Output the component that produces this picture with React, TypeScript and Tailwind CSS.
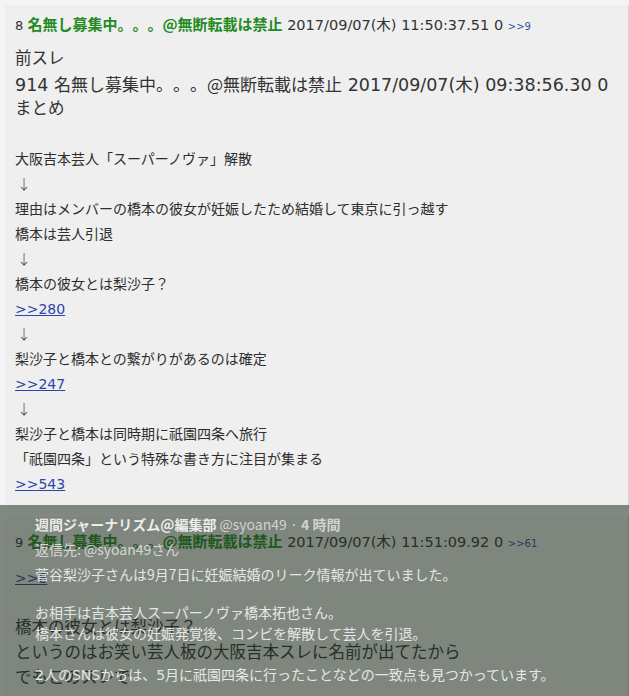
const sans = "font-['DejaVu_Sans','Noto_Sans_CJK_JP',sans-serif]";
const cjk = "font-['Noto_Sans_CJK_JP','DejaVu_Sans',sans-serif]";

function PostHeader({ no, date, reply }: { no: number; date: string; reply: string }) {
    return (
        <div className={`${sans} flex items-baseline h-[20px] text-[14.5px] leading-[20px] text-[#333] whitespace-nowrap`}>
            <span className="text-[13px]">{no}&nbsp;</span>
            <b className={`${cjk} text-[15px] leading-[20px] font-bold text-[#238b23]`}>名無し募集中。。。@無断転載は禁止</b>
            <span>&nbsp;{date}&nbsp;</span>
            <span className="text-[10px] text-[#3050a8]">{reply}</span>
        </div>
    );
}

function Anchor({ to }: { to: string }) {
    return <span className={`${sans} text-[14px] text-[#2b45a8] underline`}>{to}</span>;
}

export default function App() {
    const big = `${sans} h-[25px] text-[16.5px] leading-[25px] text-[#333] whitespace-nowrap`;
    const small = `${cjk} h-[25px] text-[14px] leading-[25px] text-[#2e2e2e] whitespace-nowrap`;
    const arrow = `${cjk} h-[25px] text-[14px] leading-[25px] font-light text-[#444] pl-[2px]`;

    return (
        <div className="relative h-[696px] w-[629px] overflow-hidden bg-[#f4f4f6] pl-[5px] pt-[5px] [text-spacing-trim:space-all]">
            {/* レス 8 */}
            <div className="mb-[7px] w-[624px] border-r border-[#d6d6d6] bg-[#efefef] pl-[10px] pt-[9px] pb-[12px]">
                <PostHeader no={8} date="2017/09/07(木) 11:50:37.51 0" reply=">>9" />
                <div className="mt-[12px]">
                    <div className={big}>前スレ</div>
                    <div className={`${big} text-[17.5px]`}>
                        914 <span className={`${cjk} text-[17px]`}>名無し募集中。。。@無断転載は禁止</span> 2017/09/07(木) 09:38:56.30 0
                    </div>
                    <div className={big}>まとめ</div>
                    <div className={small}>&nbsp;</div>
                    <div className={small}>大阪吉本芸人「スーパーノヴァ」解散</div>
                    <div className={arrow}>↓</div>
                    <div className={small}>理由はメンバーの橋本の彼女が妊娠したため結婚して東京に引っ越す</div>
                    <div className={small}>橋本は芸人引退</div>
                    <div className={arrow}>↓</div>
                    <div className={small}>橋本の彼女とは梨沙子？</div>
                    <div className={small}><Anchor to=">>280" /></div>
                    <div className={arrow}>↓</div>
                    <div className={small}>梨沙子と橋本との繋がりがあるのは確定</div>
                    <div className={small}><Anchor to=">>247" /></div>
                    <div className={arrow}>↓</div>
                    <div className={small}>梨沙子と橋本は同時期に祇園四条へ旅行</div>
                    <div className={small}>「祇園四条」という特殊な書き方に注目が集まる</div>
                    <div className={small}><Anchor to=">>543" /></div>
                </div>
            </div>

            {/* レス 9 */}
            <div className="w-[624px] border-t border-[#fbfbfb] border-r border-r-[#d6d6d6] bg-[#efefef] pl-[10px] pt-[15px] pb-[20px]">
                <PostHeader no={9} date="2017/09/07(木) 11:51:09.92 0" reply=">>61" />
                <div className="mt-[14px]">
                    <div className={big}><Anchor to=">>8" /></div>
                    <div className={big}>&nbsp;</div>
                    <div className={`${big} h-[24px] leading-[24px]`}>橋本の彼女とは梨沙子？</div>
                    <div className={`${big} h-[24px] leading-[24px]`}>というのはお笑い芸人板の大阪吉本スレに名前が出てたから</div>
                    <div className={big}>でもこのスレで</div>
                </div>
            </div>

            {/* 半透明のツイート画像 */}
            <div className={`${cjk} absolute inset-x-0 top-[505px] bottom-0 bg-[rgba(30,45,30,0.54)] pl-[35px] pt-[7px] text-[14px] text-[#e6e6e6] whitespace-nowrap`}>
                <div className="leading-[25px]">
                    <b className="font-bold text-[#ececec]">週間ジャーナリズム@編集部</b>{" "}
                    <span className="text-[#d2d2d2]">@syoan49 · </span>
                    <span className="font-semibold text-[#d2d2d2]">4 時間</span>
                </div>
                <div className="leading-[25px] text-[#d6d6d6]">返信先: @syoan49さん</div>
                <div className="leading-[25px]">菅谷梨沙子さんは9月7日に妊娠結婚のリーク情報が出ていました。</div>
                <div className="mt-[15px] leading-[21px]">
                    <div>お相手は吉本芸人スーパーノヴァ橋本拓也さん。</div>
                    <div>橋本さんは彼女の妊娠発覚後、コンビを解散して芸人を引退。</div>
                    <div>&nbsp;</div>
                    <div className={sans}>2人のSNSからは、5月に祇園四条に行ったことなどの一致点も見つかっています。</div>
                </div>
            </div>
        </div>
    );
}
